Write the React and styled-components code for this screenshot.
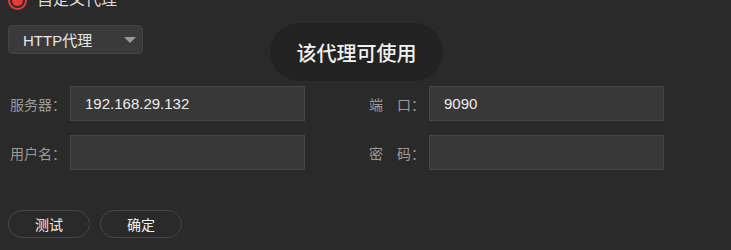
import React from "react";
import styled, { createGlobalStyle } from "styled-components";

const GlobalStyle = createGlobalStyle`
  html, body {
    margin: 0;
    padding: 0;
    background: #2a2a2a;
    overflow: hidden;
  }
  body {
    font-family: "Liberation Sans", "Noto Sans CJK SC", sans-serif;
  }
`;

const Page = styled.div`
  position: relative;
  width: 731px;
  height: 250px;
  padding: 0 8px;
  box-sizing: border-box;
  background: #2a2a2a;
  overflow: hidden;
`;

const RadioRow = styled.label`
  display: flex;
  align-items: center;
  gap: 10px;
  height: 20px;
  margin-top: -10px;
  color: #dcdcdc;
  font-size: 16px;
  line-height: 20px;
`;

const RadioDot = styled.span`
  width: 19px;
  height: 19px;
  box-sizing: border-box;
  border-radius: 50%;
  border: 2px solid #e23c3c;
  padding: 2px;
  display: flex;
  span {
    flex: 1;
    border-radius: 50%;
    background: #e23c3c;
  }
`;

const Select = styled.div`
  display: flex;
  align-items: center;
  justify-content: space-between;
  width: 135px;
  height: 29px;
  margin-top: 15px;
  padding: 0 6px 0 14px;
  box-sizing: border-box;
  background: #3a3a3a;
  border: 1px solid #444;
  border-radius: 4px;
  color: #e6e6e6;
  font-size: 15px;
`;

const Caret = styled.span`
  width: 0;
  height: 0;
  border-left: 6px solid transparent;
  border-right: 6px solid transparent;
  border-top: 6px solid #9a9a9a;
`;

const Form = styled.div`
  display: grid;
  grid-template-columns: 297px 297px;
  column-gap: 62px;
  row-gap: 14px;
  margin-top: 32px;
`;

const Field = styled.div`
  display: flex;
  align-items: center;
`;

const Label = styled.span`
  width: 62px;
  padding-left: 2px;
  box-sizing: border-box;
  color: #9a9a9a;
  font-size: 14px;
  white-space: pre;
`;

const Input = styled.div`
  width: 235px;
  height: 35px;
  box-sizing: border-box;
  padding-left: 14px;
  display: flex;
  align-items: center;
  background: #383838;
  border: 1px solid #464646;
  color: #ececec;
  font-size: 15px;
`;

const Actions = styled.div`
  display: flex;
  gap: 10px;
  margin-top: 40px;
`;

const Button = styled.button`
  width: 82px;
  height: 28px;
  border-radius: 14px;
  background: transparent;
  border: 1px solid #474747;
  color: #f0f0f0;
  font-family: inherit;
  font-size: 14px;
  padding: 0;
`;

const Toast = styled.div`
  position: absolute;
  left: 270px;
  top: 23px;
  width: 173px;
  height: 58px;
  border-radius: 29px;
  background: #222222;
  color: #f2f2f2;
  font-size: 20px;
  font-weight: 500;
  display: flex;
  align-items: center;
  justify-content: center;
`;

const fields = [
  { label: "服务器：", value: "192.168.29.132" },
  { label: "端　口：", value: "9090" },
  { label: "用户名：", value: "" },
  { label: "密　码：", value: "" },
];

export default function App() {
  return (
    <Page>
      <GlobalStyle />
      <RadioRow>
        <RadioDot>
          <span />
        </RadioDot>
        自定义代理
      </RadioRow>
      <Select>
        HTTP代理
        <Caret />
      </Select>
      <Form>
        {fields.map((f) => (
          <Field key={f.label}>
            <Label>{f.label}</Label>
            <Input>{f.value}</Input>
          </Field>
        ))}
      </Form>
      <Actions>
        <Button>测试</Button>
        <Button>确定</Button>
      </Actions>
      <Toast>该代理可使用</Toast>
    </Page>
  );
}
